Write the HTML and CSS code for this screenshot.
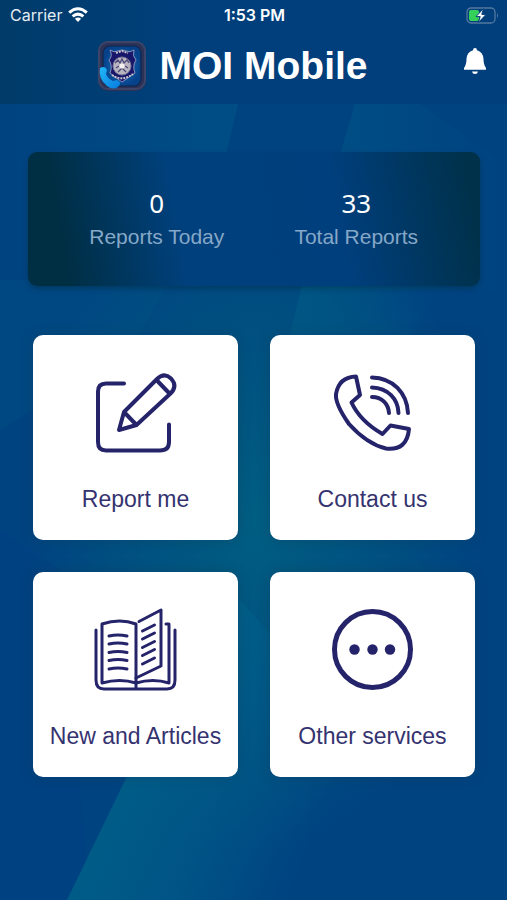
FILE: index.html
```
<!DOCTYPE html>
<html lang="en">
<head>
  <meta charset="UTF-8">
  <meta name="viewport" content="width=device-width, initial-scale=1">
  <title>MOI Mobile</title>
  <link rel="stylesheet" href="styles.css">
</head>
<body>
  <svg class="backdrop" viewBox="0 0 507 900" preserveAspectRatio="none" aria-hidden="true">
    <defs>
      <radialGradient id="glow">
        <stop offset="0" stop-color="#005e82"/>
        <stop offset="0.5" stop-color="#005880" stop-opacity="0.7"/>
        <stop offset="1" stop-color="#005880" stop-opacity="0"/>
      </radialGradient>
      <linearGradient id="ray" x1="0" y1="0" x2="1" y2="0">
        <stop offset="0" stop-color="#00648a" stop-opacity="0.75"/>
        <stop offset="1" stop-color="#00648a" stop-opacity="0"/>
      </linearGradient>
      <linearGradient id="beam" gradientUnits="userSpaceOnUse" x1="130" y1="770" x2="310" y2="850">
        <stop offset="0" stop-color="#006088" stop-opacity="0.85"/>
        <stop offset="0.4" stop-color="#005c88" stop-opacity="0.75"/>
        <stop offset="1" stop-color="#005c88" stop-opacity="0"/>
      </linearGradient>
      <linearGradient id="fade" x1="1" y1="0" x2="0" y2="0">
        <stop offset="0" stop-color="#005286" stop-opacity="0.7"/>
        <stop offset="1" stop-color="#005286" stop-opacity="0"/>
      </linearGradient>
    </defs>
    <rect width="507" height="900" fill="#004381"/>
    <polygon points="0,104 238,104 222,170 0,280" fill="url(#fade)"/>
    <polygon points="355,104 420,104 507,165 507,290 300,290" fill="url(#ray)" opacity="0.5"/>
    <polygon points="0,280 170,280 130,350 0,430" fill="#004c84" opacity="0.6"/>
    <polygon points="302,285 440,285 360,420 270,420" fill="url(#ray)" opacity="0.8"/>
    <ellipse cx="255" cy="520" rx="230" ry="330" fill="url(#glow)"/>
    <polygon points="0,530 60,570 90,900 0,900" fill="#003f80" opacity="0.3"/>
    <polygon points="222,580 507,900 67,900" fill="url(#beam)"/>
  </svg>

  <header class="topbar">
    <div class="status">
      <div class="carrier">
        <span>Carrier</span>
        <svg width="20" height="16" viewBox="0 0 20 16" aria-hidden="true">
          <g fill="none" stroke="#fff" stroke-width="3">
            <path d="M1.2 5.6 Q10 -2.2 18.8 5.6"/>
            <path d="M4.6 9.4 Q10 4.8 15.4 9.4"/>
          </g>
          <path d="M10 15 L6.9 11.8 Q10 9.4 13.1 11.8 Z" fill="#fff"/>
        </svg>
      </div>
      <div class="time">1:53 PM</div>
      <div class="battery">
        <svg width="33" height="17" viewBox="0 0 33 17" aria-hidden="true">
          <rect x="1" y="1" width="28" height="15" rx="4" fill="none" stroke="#53789f" stroke-width="1.3"/>
          <path d="M31 6 Q33 8.5 31 11 Z" fill="#53789f"/>
          <rect x="3" y="3" width="10" height="11" rx="2" fill="#35d05a"/>
          <path d="M17.5 1.5 L10 9.6 H14.2 L12.4 15.5 L20 7.4 H15.8 Z" fill="#fff" stroke="#00407b" stroke-width="1"/>
        </svg>
      </div>
    </div>
    <div class="titlebar">
      <div class="brand">
        <svg width="52" height="54" viewBox="0 0 52 54" aria-hidden="true">
          <defs>
            <radialGradient id="plate">
              <stop offset="0" stop-color="#1676c0"/>
              <stop offset="1" stop-color="#06418a"/>
            </radialGradient>
            <linearGradient id="handset" x1="0" y1="0" x2="1" y2="1">
              <stop offset="0" stop-color="#22b8fa"/>
              <stop offset="1" stop-color="#087bdd"/>
            </linearGradient>
          </defs>
          <rect x="2" y="2" width="48" height="50" rx="10" fill="#2b3157"/>
          <rect x="3" y="3" width="46" height="47" rx="9" fill="none" stroke="#3c4468" stroke-width="2"/>
          <rect x="7" y="7" width="38" height="40" rx="7" fill="url(#plate)" stroke="#10264c" stroke-width="1.2"/>
          <path d="M14 11 Q18 14 22 12 Q26 10 30 12 Q34 14 38 11 Q36 17 40 21 Q36 27 39 34 Q33 38 26 43 Q19 38 14 34 Q17 27 13 21 Q17 17 14 11 Z" fill="#17166a" stroke="#a9a8c5" stroke-width="0.8"/>
          <path d="M20 14 L26 12 L32 14 M16 36 Q26 43 37 35" fill="none" stroke="#c9c6cc" stroke-width="2" stroke-dasharray="2 1"/>
          <circle cx="26" cy="27" r="9" fill="#b9b5c0" stroke="#777594" stroke-width="1"/>
          <path d="M19 24 L22 21 L24 24 L26 20 L28 24 L31 21 L33 24 M20 29 L23 27 M29 27 L32 29 M22 33 L26 29 L30 33" fill="none" stroke="#4b4877" stroke-width="1.3"/>
          <circle cx="26" cy="27" r="2.6" fill="#f4f1ef"/>
          <path d="M4 29 Q9 26 11 31 L10 35 Q12 40 17 42 L21 41 Q26 43 23 47 Q18 52 11 47 Q2 40 4 29 Z" fill="url(#handset)"/>
        </svg>
        <h1>MOI Mobile</h1>
      </div>
      <button class="bell" type="button" aria-label="Notifications">
        <svg width="24" height="28" viewBox="0 0 24 28" aria-hidden="true">
          <path d="M12 1 Q14 1 14 3.3 Q20 5 20.5 12 Q20.6 18 23 21 V22.7 H1 V21 Q3.4 18 3.5 12 Q4 5 10 3.3 Q10 1 12 1 Z" fill="#fff"/>
          <path d="M9 24.5 H15 Q14.5 27 12 27 Q9.5 27 9 24.5 Z" fill="#fff"/>
        </svg>
      </button>
    </div>
  </header>

  <main>
    <section class="stats">
      <div class="stat">
        <div class="number">0</div>
        <div class="caption">Reports Today</div>
      </div>
      <div class="stat">
        <div class="number">33</div>
        <div class="caption">Total Reports</div>
      </div>
    </section>

    <nav class="menu">
      <button class="card" type="button">
        <svg class="icon" viewBox="1 0 110 110" aria-hidden="true">
          <path d="M44 23.5 H26 Q18 23.5 18 31.5 V82 Q18 90.5 26 90.5 H80 Q89 90.5 89 82 V64.5"/>
          <path d="M39 70 L44 52 L76.5 19.5 Q84 12 91 18.5 Q98 26 90.5 33.5 L56.5 65 Z M44 52 L56.5 65 M76.5 20 L89 33"/>
        </svg>
        <span>Report me</span>
      </button>
      <button class="card" type="button">
        <svg class="icon" viewBox="-2 0 110 110" aria-hidden="true">
          <path d="M36 16.5 L40 35 L31.5 42.5 Q40 61 62.5 74 L70.5 65.5 L89 69 Q87 91 66 88.5 Q47 84 29 64 Q15 44 16 34 Q19 17 36 16.5 Z"/>
          <path d="M52 17.5 C73 18 87 33 88 53 M52 27.5 C68 28 78 39 78.5 53 M52 37 C62 37 68.5 44 69 53"/>
        </svg>
        <span>Contact us</span>
      </button>
      <button class="card" type="button">
        <svg class="icon thin" viewBox="1 2 110 110" aria-hidden="true">
          <path d="M16 35 V85 Q16 94 24 94 H87 Q95 94 95 85 V35"/>
          <path d="M56 93 V29 Q40 23 22 29 V88 Q40 83 56 88 Q73 83 89 88 V29 H86"/>
          <path d="M59 26.5 L81 15 V71 L56 83"/>
          <path d="M29 41 Q38 39 47 41 M29 49 Q38 47 47 49 M29 57.5 Q38 55.5 47 57.5 M29 65.5 Q38 63.5 47 65.5 M29 74 Q38 72 47 74"/>
          <path d="M62.5 36 L74.5 30 M62.5 44 L74.5 38 M62.5 52.5 L74.5 46.5 M62.5 60.5 L74.5 54.5 M62.5 69 L74.5 63"/>
        </svg>
        <span>New and Articles</span>
      </button>
      <button class="card" type="button">
        <svg class="icon" viewBox="-2 2 110 110" aria-hidden="true">
          <circle cx="52.5" cy="54.5" r="38" stroke-width="5"/>
          <g class="dots">
            <circle cx="34.5" cy="54.5" r="5.2"/>
            <circle cx="52.5" cy="54.5" r="5.2"/>
            <circle cx="70" cy="54.5" r="5.2"/>
          </g>
        </svg>
        <span>Other services</span>
      </button>
    </nav>
  </main>
</body>
</html>
```
FILE: styles.css
```
* { box-sizing: border-box; }
body { margin: 0; min-height: 100vh; position: relative; background: #004381; font-family: "Liberation Sans", Arial, sans-serif; }
button { border: 0; padding: 0; background: none; font: inherit; cursor: pointer; }
svg { display: block; }
.backdrop { position: absolute; top: 0; left: 0; width: 100%; height: 100%; z-index: -1; }

.topbar { background: linear-gradient(90deg, #003b69, #003f7b 35%, #003f7b); color: #fff; }
.status { display: grid; grid-template-columns: 1fr auto 1fr; align-items: center; height: 30px; padding: 0 8px 0 10px; font-family: Inter, "Liberation Sans", sans-serif; font-size: 16px; }
.carrier { display: flex; align-items: center; gap: 6px; color: #e4ecf4; }
.time { font-weight: 600; }
.battery { justify-self: end; }
.titlebar { display: flex; align-items: center; height: 74px; padding-right: 20px; }
.brand { display: flex; flex: 1; align-items: center; justify-content: center; gap: 12px; padding-bottom: 2px; }
.brand h1 { margin: 0; font-size: 39px; line-height: 44px; }
.bell { align-self: flex-start; margin-top: 17px; }

.stats { display: grid; grid-template-columns: 1fr 1fr; margin: 48px 27px 0 28px; padding: 34px 24px 33px 29px; border-radius: 9px; background: linear-gradient(80deg, #002e42 8%, #00407c 34%, #003f7d 68%, #00314a 97%); box-shadow: 0 3px 5px rgba(0, 45, 75, 0.5); text-align: center; }
.number { color: #fff; font-family: "Noto Sans", sans-serif; font-size: 26px; line-height: 35px; }
.caption { color: #86a8c8; font-size: 21px; line-height: 32px; }

.menu { display: grid; grid-template-columns: 1fr 1fr; gap: 32px; padding: 49px 32px 32px 33px; }
.card { display: flex; flex-direction: column; align-items: center; gap: 14px; padding: 25px 0 26px; border-radius: 10px; background: #fff; color: #35336f; font-size: 23px; line-height: 30px; box-shadow: 0 0 12px rgba(20, 60, 90, 0.4); }
.icon { width: 110px; height: 110px; fill: none; stroke: #25246a; stroke-width: 4; stroke-linecap: round; stroke-linejoin: round; }
.thin { stroke-width: 3; }
.dots { fill: #25246a; stroke: none; }
```
